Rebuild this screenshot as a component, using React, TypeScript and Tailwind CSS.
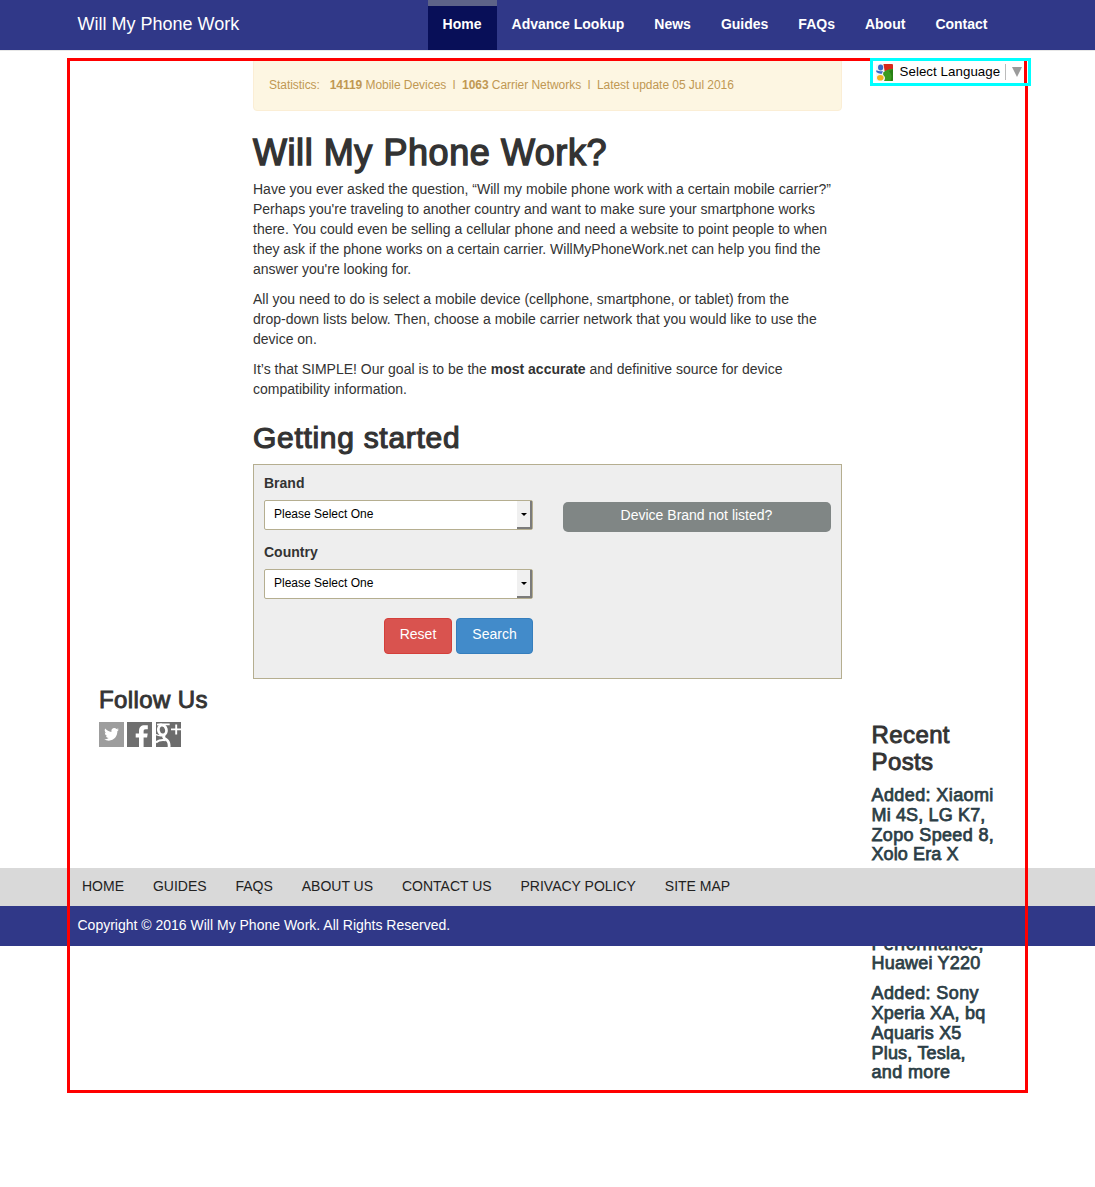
import type { ReactNode } from "react";

const navItems = ["Home", "Advance Lookup", "News", "Guides", "FAQs", "About", "Contact"];
const footerItems = ["HOME", "GUIDES", "FAQS", "ABOUT US", "CONTACT US", "PRIVACY POLICY", "SITE MAP"];

function Header() {
  return (
    <header className="h-[51px] border-b border-[#e7e7e7] bg-[#303888] text-white">
      <div className="flex h-[50px] justify-between pl-[77.5px] pr-[92.5px]">
        <span className="text-[18px] leading-[48px]">Will My Phone Work</span>
        <nav className="flex">
          {navItems.map((item, i) => (
            <a
              key={item}
              className={
                i === 0
                  ? "border-t-[6px] border-[#5d6388] bg-[#080f58] px-[15px] text-sm leading-[37px] font-bold"
                  : "px-[15px] pt-[6px] text-sm leading-[37px] font-bold"
              }
            >
              {item}
            </a>
          ))}
        </nav>
      </div>
    </header>
  );
}

function Statistics() {
  return (
    <div className="h-[53px] rounded border border-[#fbeed5] bg-[#fdf6e2] pt-[17px] pl-[15px] text-xs leading-[18px] tracking-[-0.045px] whitespace-pre text-[#c09853]">
      {"Statistics:   "}
      <b>14119</b>
      {" Mobile Devices  l  "}
      <b>1063</b>
      {" Carrier Networks  l  Latest update 05 Jul 2016"}
    </div>
  );
}

function SelectField({ label }: { label: string }) {
  return (
    <div className="h-[69px]">
      <div className="h-[27px] text-sm leading-5 font-bold">{label}</div>
      <div className="flex h-[30px] w-[269px] justify-between rounded-[2px] border border-[#b5ae90] bg-white text-black">
        <span className="pl-[9px] text-xs leading-[27px]">Please Select One</span>
        <span className="flex w-[15px] items-center justify-center border-r-2 border-b-2 border-[#7b7b7b] bg-[#f0f0f0]">
          <svg width="6" height="3" viewBox="0 0 6 3">
            <path d="M0 0h6L3 3z" fill="#000" />
          </svg>
        </span>
      </div>
    </div>
  );
}

function LookupForm() {
  return (
    <div className="flex h-[215px] justify-between border border-[#b5ae90] bg-[#eee] px-[10px] pt-[8px]">
      <div className="w-[269px]">
        <SelectField label="Brand" />
        <SelectField label="Country" />
        <div className="mt-[7px] flex justify-end gap-1 text-sm leading-[31px] text-white">
          <button className="h-9 w-[68px] rounded border border-[#d43f3a] bg-[#d9534f] pb-[3px]">Reset</button>
          <button className="h-9 w-[77px] rounded border border-[#357ebd] bg-[#428bca] pb-[3px]">Search</button>
        </div>
      </div>
      <button className="mt-[29px] h-[30px] w-[268px] rounded-[5px] bg-[#808685] pr-[1px] pb-[3px] text-sm leading-[27px] text-white">
        Device Brand not listed?
      </button>
    </div>
  );
}

function SocialIcons() {
  return (
    <div className="flex">
      <svg width="25" height="25" viewBox="0 0 25 25" className="mr-[3px]">
        <rect width="25" height="25" fill="#9d9d9d" />
        <path
          transform="translate(5.2 4.5) scale(.61 .65)"
          fill="#fff"
          d="M23.95 4.57a10 10 0 0 1-2.82.77 4.96 4.96 0 0 0 2.16-2.72c-.95.55-2 .96-3.13 1.18a4.92 4.92 0 0 0-8.38 4.48C7.69 8.1 4.07 6.13 1.64 3.16a4.92 4.92 0 0 0 1.52 6.57 4.9 4.9 0 0 1-2.23-.61v.06a4.92 4.92 0 0 0 3.95 4.83 5 5 0 0 1-2.21.08 4.94 4.94 0 0 0 4.6 3.42A9.87 9.87 0 0 1 0 19.54a13.99 13.99 0 0 0 7.56 2.21c9.05 0 14-7.5 14-13.98 0-.21 0-.42-.02-.63a9.94 9.94 0 0 0 2.41-2.57z"
        />
      </svg>
      <svg width="25" height="25" viewBox="0 0 25 25" className="mr-1">
        <rect width="25" height="25" fill="#6f6f6f" />
        <path fill="#fff" d="M12 25v-9.4H8.7v-4H12V9c0-3.8 2-5.8 5.6-5.8h3.2v4.1h-2.1c-1.7 0-2.1.7-2.1 2.1v2.2h4.1l-.6 4h-3.5V25z" />
      </svg>
      <svg width="25" height="25" viewBox="0 0 25 25">
        <rect width="25" height="25" fill="#6c6c6c" />
        <g fill="none" stroke="#fff">
          <ellipse cx="6.4" cy="8" rx="4" ry="5" strokeWidth="2.8" transform="rotate(-14 6.4 8)" />
          <path d="M1 2.6Q5 1.8 7 2.4h6.7" strokeWidth="1.6" />
          <path d="M8.7 13c-1.8 1.6-1.3 2.6.7 3.9 2.8 1.7 4.3 4 3.6 8.6" strokeWidth="2.8" />
          <path d="M0 20.4c2.2-2 5.5-2.8 9.7-2.2" strokeWidth="2" />
          <path d="M0 12.5c2 1.2 4 1.5 7 1" strokeWidth="1.4" />
          <path d="M15 7.4h10M20.2 2.5v10" strokeWidth="1.9" />
        </g>
      </svg>
    </div>
  );
}

function GoogleIcon() {
  return (
    <svg width="17" height="17" viewBox="0 0 17 17" className="shrink-0">
      <rect x=".2" y=".2" width="16.6" height="16.6" rx="1" fill="#f5f6f8" />
      <path d="M7.5 0H16q1 0 1 1v5.5L8.6 7z" fill="#d8291c" />
      <path d="M7.2 8.6Q11 4.8 17 5v11q0 1-1 1H8q2.4-3.6-.8-6z" fill="#399a20" />
      <path d="M13 7q4 4 1.5 10H16q1 0 1-1V5.5z" fill="#267f14" />
      <ellipse cx="4.6" cy="3.4" rx="2.6" ry="3" fill="#3869c8" />
      <path d="M.3 6.2q3.7 1.7 6.6.7l-1 2.8Q2.8 10.2 .3 8z" fill="#3869c8" />
      <ellipse cx="4.3" cy="13.7" rx="3.3" ry="2.8" fill="#f2b21c" />
    </svg>
  );
}

function Medium({ className, children }: { className: string; children: ReactNode }) {
  return <div className={`whitespace-nowrap ${className}`}>{children}</div>;
}

const postStyle = "text-[18px] leading-[19.8px] text-[#2c3e46] [-webkit-text-stroke:0.75px_#2c3e46]";

export default function App() {
  return (
    <div className="relative h-[1187px] overflow-hidden bg-white font-['Liberation_Sans',Arial,sans-serif] text-[#333]">
      <Header />

      <main className="flex h-[817px] items-start pl-[99px]">
        <aside className="w-[154px] pt-[634px]">
          <Medium className="h-[37px] text-2xl leading-[30px] tracking-[0.4px] [-webkit-text-stroke:0.9px_#333]">
            Follow Us
          </Medium>
          <SocialIcons />
        </aside>

        <section className="w-[589px] pt-[7px]">
          <Statistics />
          <h1 className="mt-[22px] h-[46px] text-[36px] leading-[40px] tracking-[0.56px] whitespace-nowrap [-webkit-text-stroke:1.4px_#333]">
            Will My Phone Work?
          </h1>
          <div className="space-y-[10px] text-sm leading-5 tracking-[-0.003px] whitespace-nowrap">
            <p>
              Have you ever asked the question, “Will my mobile phone work with a certain mobile carrier?”
              <br />
              Perhaps you're traveling to another country and want to make sure your smartphone works
              <br />
              there. You could even be selling a cellular phone and need a website to point people to when
              <br />
              they ask if the phone works on a certain carrier. WillMyPhoneWork.net can help you find the
              <br />
              answer you're looking for.
            </p>
            <p>
              All you need to do is select a mobile device (cellphone, smartphone, or tablet) from the
              <br />
              drop-down lists below. Then, choose a mobile carrier network that you would like to use the
              <br />
              device on.
            </p>
            <p>
              It’s that SIMPLE! Our goal is to be the <b>most accurate</b> and definitive source for device
              <br />
              compatibility information.
            </p>
          </div>
          <h2 className="mt-[22px] mb-[10px] text-[30px] leading-[33px] tracking-[0.7px] whitespace-nowrap [-webkit-text-stroke:1.15px_#333]">
            Getting started
          </h2>
          <LookupForm />
        </section>

        <aside className="ml-[29.5px] w-[140px] pt-[670px]">
          <Medium className="text-2xl leading-[27px] tracking-[0.4px] [-webkit-text-stroke:0.9px_#333]">
            Recent
            <br />
            Posts
          </Medium>
          <div className="mt-[11px] space-y-[10px]">
            <Medium className={postStyle}>
              <span className="tracking-[0.4px]">Added: Xiaomi</span>
              <br />
              <span className="tracking-[0.15px]">Mi 4S, LG K7,</span>
              <br />
              <span className="tracking-[0.35px]">Zopo Speed 8,</span>
              <br />
              <span className="tracking-[0.1px]">Xolo Era X</span>
            </Medium>
            <Medium className={`${postStyle} pt-[59.4px]`}>
              <span className="tracking-[0.35px]">Performance,</span>
              <br />
              <span className="tracking-[0.2px]">Huawei Y220</span>
            </Medium>
            <Medium className={postStyle}>
              <span className="tracking-[0.4px]">Added: Sony</span>
              <br />
              <span className="tracking-[0.22px]">Xperia XA, bq</span>
              <br />
              <span className="tracking-[0.2px]">Aquaris X5</span>
              <br />
              <span className="tracking-[0.2px]">Plus, Tesla,</span>
              <br />
              <span className="tracking-[0.35px]">and more</span>
            </Medium>
          </div>
        </aside>
      </main>

      <footer className="relative z-10">
        <nav className="flex h-[38px] gap-[28.9px] bg-[#d9d9d9] pl-[82px] text-sm leading-[36px] text-[#222]">
          {footerItems.map((item) => (
            <a key={item}>{item}</a>
          ))}
        </nav>
        <div className="h-10 bg-[#303888] pl-[77.5px] text-sm leading-[38px] text-white">
          Copyright © 2016 Will My Phone Work. All Rights Reserved.
        </div>
      </footer>

      <div className="pointer-events-none absolute top-[58px] left-[67px] z-20 h-[1035px] w-[961px] border-[3px] border-[#f00]" />
      <div className="absolute top-[58px] left-[870px] z-30 flex h-[28px] w-[161px] items-center border-[3px] border-[#0ff] bg-white pl-[3px] text-black">
        <GoogleIcon />
        <span className="ml-[6.5px] text-[13.3px] leading-4 tracking-[0.06px] whitespace-nowrap">Select Language</span>
        <span className="ml-[4.5px] h-4 w-px shrink-0 bg-[#bbb]" />
        <svg width="10" height="10" viewBox="0 0 10 10" className="ml-[6px] shrink-0">
          <path d="M0 0h10L5 10z" fill="#9b9b9b" />
        </svg>
        <span className="ml-[2px] h-[22px] w-[3px] shrink-0 bg-[#f00]" />
      </div>
    </div>
  );
}
